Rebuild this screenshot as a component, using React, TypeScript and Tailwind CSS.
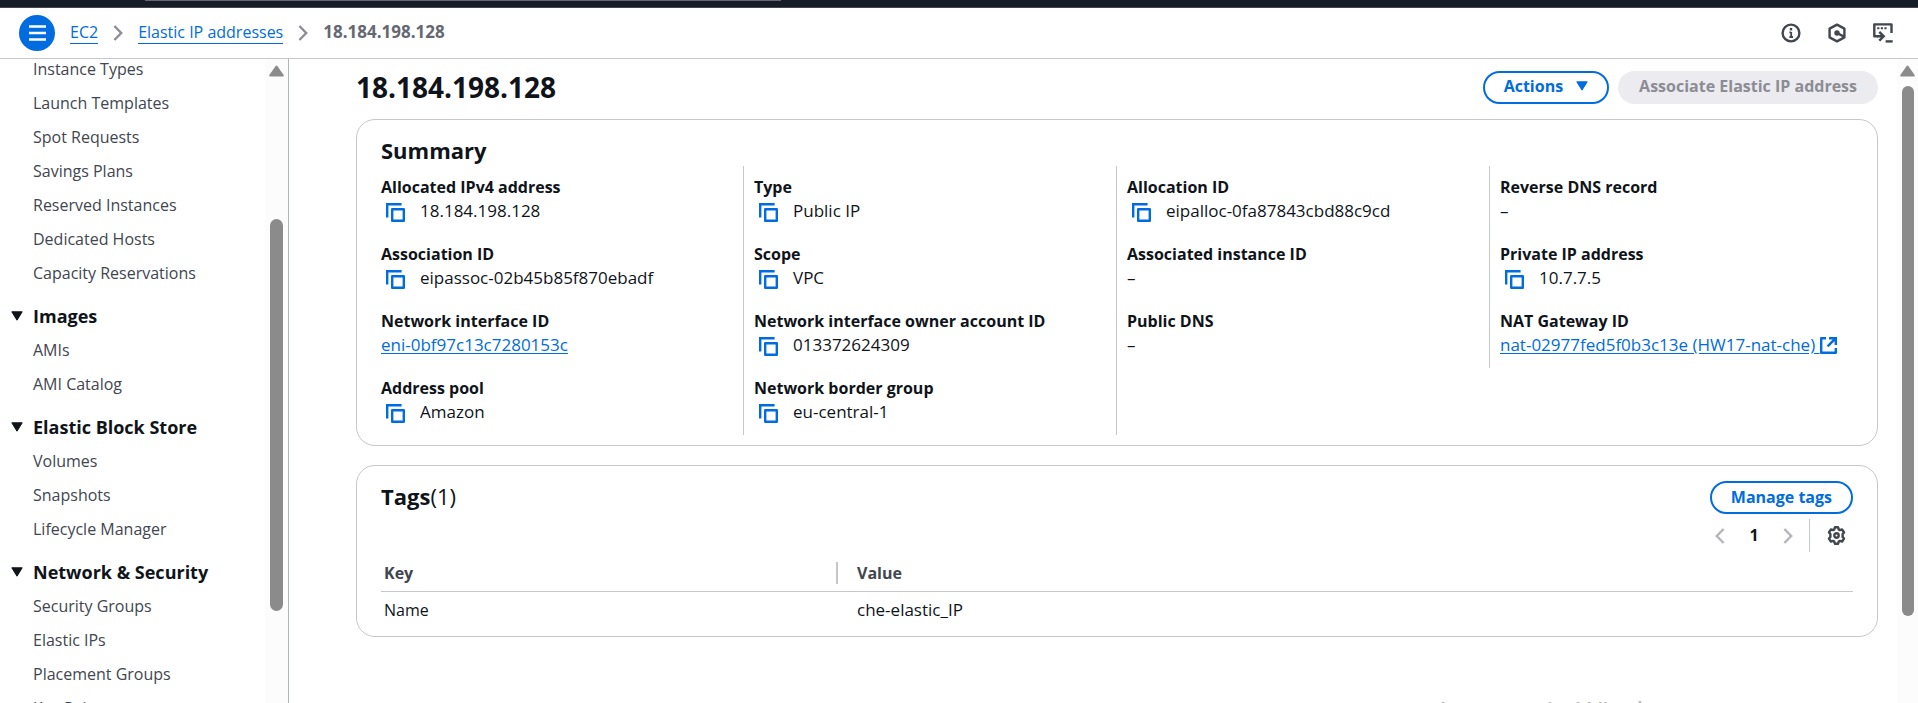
import type { ReactNode } from 'react';

const sections = [
  {
    title: '',
    items: ['Instance Types', 'Launch Templates', 'Spot Requests', 'Savings Plans', 'Reserved Instances', 'Dedicated Hosts', 'Capacity Reservations'],
  },
  { title: 'Images', items: ['AMIs', 'AMI Catalog'] },
  { title: 'Elastic Block Store', items: ['Volumes', 'Snapshots', 'Lifecycle Manager'] },
  { title: 'Network & Security', items: ['Security Groups', 'Elastic IPs', 'Placement Groups', 'Key Pairs'] },
];

type Field = { label: string; value: string; kind: 'copy' | 'link' | 'external' | 'plain' };

const columns: Field[][] = [
  [
    { label: 'Allocated IPv4 address', value: '18.184.198.128', kind: 'copy' },
    { label: 'Association ID', value: 'eipassoc-02b45b85f870ebadf', kind: 'copy' },
    { label: 'Network interface ID', value: 'eni-0bf97c13c7280153c', kind: 'link' },
    { label: 'Address pool', value: 'Amazon', kind: 'copy' },
  ],
  [
    { label: 'Type', value: 'Public IP', kind: 'copy' },
    { label: 'Scope', value: 'VPC', kind: 'copy' },
    { label: 'Network interface owner account ID', value: '013372624309', kind: 'copy' },
    { label: 'Network border group', value: 'eu-central-1', kind: 'copy' },
  ],
  [
    { label: 'Allocation ID', value: 'eipalloc-0fa87843cbd88c9cd', kind: 'copy' },
    { label: 'Associated instance ID', value: '–', kind: 'plain' },
    { label: 'Public DNS', value: '–', kind: 'plain' },
  ],
  [
    { label: 'Reverse DNS record', value: '–', kind: 'plain' },
    { label: 'Private IP address', value: '10.7.7.5', kind: 'copy' },
    { label: 'NAT Gateway ID', value: 'nat-02977fed5f0b3c13e (HW17-nat-che)', kind: 'external' },
  ],
];

function CopyIcon() {
  return (
    <svg width="19" height="19" viewBox="0 0 19 19" fill="none" stroke="currentColor" strokeWidth="2.4" aria-hidden="true">
      <path d="M1.2 14.6V1.2H15.6" />
      <path d="M6.2 6.2H17.8V17.8H6.2Z" strokeLinejoin="round" />
    </svg>
  );
}

function ExternalIcon() {
  return (
    <svg width="17" height="17" viewBox="0 0 17 17" fill="none" stroke="currentColor" strokeWidth="2.4" aria-hidden="true">
      <path d="M6 1.2H1.2V15.8H15.8V11" strokeLinejoin="round" />
      <path d="M9 1.2H15.8V8M15.8 1.2L7.6 9.4" />
    </svg>
  );
}

function Chevron({ left = false }: { left?: boolean }) {
  return (
    <svg width="10" height="16" viewBox="0 0 10 16" fill="none" stroke="currentColor" strokeWidth="2.4" aria-hidden="true">
      <path d={left ? 'M8.6 1L1.8 8L8.6 15' : 'M1.4 1L8.2 8L1.4 15'} />
    </svg>
  );
}

function Caret() {
  return (
    <svg width="12" height="10" viewBox="0 0 12 10" fill="currentColor" stroke="currentColor" strokeWidth="1" strokeLinejoin="round" aria-hidden="true">
      <path d="M0.8 0.8H11.2L6 9.2Z" />
    </svg>
  );
}

function InfoIcon() {
  return (
    <svg width="20" height="20" viewBox="0 0 20 20" fill="none" stroke="currentColor" strokeWidth="2.4" aria-hidden="true">
      <circle cx="10" cy="10" r="8.4" />
      <path d="M10.200 9V14.400M8.400 14H12M8.400 9.400H10.200" strokeWidth="1.8" />
      <path d="M10 5V7.400" />
    </svg>
  );
}

function HexIcon() {
  return (
    <svg width="18" height="20" viewBox="0 0 18 20" fill="none" stroke="currentColor" strokeWidth="2.4" strokeLinejoin="round" aria-hidden="true">
      <path d="M9 1.6L16.4 5.6V14.4L9 18.4L1.6 14.4V5.6Z" />
      <circle cx="9" cy="10" r="2.7" fill="currentColor" stroke="none" />
      <path d="M9 10L16 13.600" />
    </svg>
  );
}

function ShellIcon() {
  return (
    <svg width="20" height="20" viewBox="0 0 20 20" fill="none" stroke="currentColor" strokeWidth="2.4" aria-hidden="true">
      <path d="M5 13.3H1.3V1.4H18.5V10" strokeLinejoin="round" />
      <path d="M4.2 5.2H6.4M7.800 5.2H10M11.400 5.2H13.600" strokeWidth="2" />
      <path d="M4 13.3H10.500M6.300 8.900L10.700 13.300L6.300 17.700" />
      <path d="M12.600 18.400H19.700" />
    </svg>
  );
}

function GearIcon() {
  return (
    <svg width="19" height="19" viewBox="0 0 19 19" fill="none" stroke="currentColor" strokeWidth="2.4" strokeLinejoin="round" aria-hidden="true">
      <path d="M7.9 1.2h3.2l.6 2.2 1.2.7 2.2-.6 1.9 3-1.4 1.6v2.8l1.4 1.6-1.9 3-2.2-.6-1.2.7-.6 2.2H7.9l-.6-2.2-1.2-.7-2.2.6-1.9-3 1.4-1.6V8.1L2 6.5l1.9-3 2.2.6 1.2-.7z" />
      <circle cx="9.5" cy="9.5" r="2.2" />
    </svg>
  );
}

function UpArrow() {
  return (
    <svg width="15" height="12" viewBox="0 0 15 12" fill="#8b8b8b" stroke="#8b8b8b" strokeWidth="2" strokeLinejoin="round" aria-hidden="true">
      <path d="M7.5 1.5L13.8 10.5H1.2Z" />
    </svg>
  );
}

function FieldValue({ field }: { field: Field }) {
  if (field.kind === 'copy') {
    return (
      <span className="flex items-center gap-[15px] pl-[5px]">
        <button type="button" aria-label={`Copy ${field.label}`} className="mt-[2px] text-[#006ce0]">
          <CopyIcon />
        </button>
        {field.value}
      </span>
    );
  }
  if (field.kind === 'plain') return <>{field.value}</>;
  return (
    <a href="#" className="inline-flex items-center whitespace-pre text-[#006ce0] underline underline-offset-2">
      {field.kind === 'external' ? `${field.value} ` : field.value}
      {field.kind === 'external' && <ExternalIcon />}
    </a>
  );
}

function Card({ children, className }: { children: ReactNode; className: string }) {
  return <section className={`rounded-[19px] border border-[#c6c6cd] bg-white ${className}`}>{children}</section>;
}

export default function App() {
  return (
    <div className="relative flex h-screen flex-col overflow-hidden bg-white font-['Open_Sans','Noto_Sans',sans-serif] text-base leading-6 text-[#0f141a]">
      <div className="h-2 shrink-0 border-b border-[#424650] bg-[#161d26] pl-[145px]">
        <div className="h-px w-[636px] bg-[#656871]" />
      </div>

      <header className="flex h-[51px] shrink-0 items-center border-b border-[#c6c6cd] pr-[25px] pl-[19px]">
        <button type="button" aria-label="Open navigation" className="flex size-9 items-center justify-center rounded-full bg-[#006ce0] text-white">
          <svg width="17" height="16" viewBox="0 0 17 16" stroke="currentColor" strokeWidth="2.4" aria-hidden="true">
            <path d="M0 1.5H17M0 8H17M0 14.5H17" />
          </svg>
        </button>
        <nav aria-label="Breadcrumbs" className="ml-[15px] flex items-center gap-[15px] pb-px text-[#8c8c94]">
          <a href="#" className="border-b border-[#006ce0] pb-px leading-5 text-[#006ce0]">EC2</a>
          <Chevron />
          <a href="#" className="border-b border-[#006ce0] pb-px leading-5 text-[#006ce0]">Elastic IP addresses</a>
          <Chevron />
          <span className="pb-px text-[17px] font-bold text-[#656871]">18.184.198.128</span>
        </nav>
        <div className="ml-auto flex items-center gap-[27px] text-[#424650]">
          <button type="button" aria-label="Info"><InfoIcon /></button>
          <button type="button" aria-label="Settings"><HexIcon /></button>
          <button type="button" aria-label="CloudShell"><ShellIcon /></button>
        </div>
      </header>

      <div className="flex min-h-0 flex-1">
        <aside className="flex w-[289px] shrink-0 border-r border-[#b4b4bb]">
          <nav aria-label="EC2" className="flex-1 overflow-hidden pl-[11px] text-[#424650]">
            {sections.map((section, index) => (
              <div key={index} className={index === 0 ? '-mt-[7px]' : 'mt-[9px]'}>
                {section.title && (
                  <button type="button" className="flex h-[34px] items-center gap-[10px] text-lg font-bold text-[#0f141a]">
                    <Caret />
                    {section.title}
                  </button>
                )}
                <ul>
                  {section.items.map((item) => (
                    <li key={item} className="flex h-[34px] items-center pl-[22px]">
                      <a href="#">{item}</a>
                    </li>
                  ))}
                </ul>
              </div>
            ))}
          </nav>
          <div className="flex w-[23px] flex-col items-center bg-[#fcfcfc] pt-[6px]">
            <UpArrow />
            <div className="mt-[142px] h-[392px] w-[13px] rounded-full bg-[#8b8b8b]" />
          </div>
        </aside>

        <main className="min-w-0 flex-1 overflow-hidden pt-[11px] pr-[19px] pl-[67px]">
          <div className="flex items-center justify-between">
            <h1 className="text-[28px] leading-[34px] font-bold">18.184.198.128</h1>
            <div className="flex gap-[9px]">
              <button type="button" className="flex h-[33px] items-center gap-[13px] rounded-full border-2 border-[#006ce0] px-[19px] pb-[2px] font-bold text-[#006ce0]">
                Actions
                <Caret />
              </button>
              <button type="button" disabled className="h-[33px] rounded-full bg-[#ebebf0] px-[21px] pb-[2px] font-bold text-[#8c8c94]">
                Associate Elastic IP address
              </button>
            </div>
          </div>

          <Card className="mt-[15px] pt-4 pb-[10px]">
            <h2 className="pl-6 text-[22px] leading-[29px] font-bold">Summary</h2>
            <div className="mt-px mr-[15px] ml-[13px] grid grid-cols-4">
              {columns.map((fields, index) => (
                <dl
                  key={index}
                  className={`flex flex-col gap-[19px] border-l pt-[9px] pb-[11px] pl-[10px] ${index === 0 ? 'border-transparent' : 'border-[#c6c6cd]'} ${index === 3 ? 'self-start' : ''}`}
                >
                  {fields.map((field) => (
                    <div key={field.label}>
                      <dt className="font-bold">{field.label}</dt>
                      <dd className="h-6 text-[17px] leading-6">
                        <FieldValue field={field} />
                      </dd>
                    </div>
                  ))}
                </dl>
              ))}
            </div>
          </Card>

          <Card className="mt-[19px] px-6 pt-[15px] pb-[13px]">
            <div className="flex items-center justify-between">
              <h2 className="pb-[2px] text-[22px] leading-[29px] font-bold">
                Tags<span className="font-normal">(1)</span>
              </h2>
              <button type="button" className="h-[33px] rounded-full border-2 border-[#006ce0] px-[19px] pb-[2px] font-bold text-[#006ce0]">
                Manage tags
              </button>
            </div>
            <div className="mt-[5px] flex h-[33px] items-center justify-end text-[#b4b4bb]">
              <button type="button" aria-label="Previous page"><Chevron left /></button>
              <button type="button" className="w-[58px] pb-[2px] text-center font-bold text-[#0f141a]">1</button>
              <button type="button" aria-label="Next page"><Chevron /></button>
              <span className="ml-4 h-[33px] w-px bg-[#c6c6cd]" />
              <button type="button" aria-label="Preferences" className="mr-[7px] ml-[17px] text-[#424650]"><GearIcon /></button>
            </div>
            <table className="mt-[2px] w-full table-fixed text-left">
              <thead>
                <tr className="border-b border-[#c6c6cd] text-[#424650]">
                  <th className="w-[457px] p-0">
                    <div className="flex h-[37px] items-center justify-between pl-[3px]">
                      Key
                      <span className="h-[22px] w-[2px] bg-[#c6c6cd]" />
                    </div>
                  </th>
                  <th className="py-0 pr-0 pl-[19px]">Value</th>
                </tr>
              </thead>
              <tbody>
                <tr>
                  <td className="h-[31px] pt-[5px] pr-0 pb-0 pl-[3px]">Name</td>
                  <td className="h-[31px] pt-[5px] pr-0 pb-0 pl-[19px] text-[17px] leading-6">che-elastic_IP</td>
                </tr>
              </tbody>
            </table>
          </Card>
        </main>

        <div className="flex w-[21px] shrink-0 flex-col items-center bg-[#fcfcfc] pt-[6px]">
          <UpArrow />
          <div className="mt-[9px] h-[530px] w-3 rounded-full bg-[#8b8b8b]" />
        </div>
      </div>

      <p className="pointer-events-none absolute -bottom-[22px] left-[1434px] text-[28px] leading-7 whitespace-nowrap text-[#b4b4b4]">
        Активація Windows
      </p>
    </div>
  );
}
